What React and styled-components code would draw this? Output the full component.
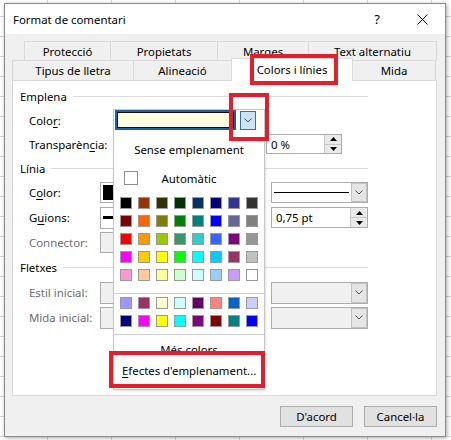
import React from "react";
import styled, { createGlobalStyle } from "styled-components";

const GlobalStyle = createGlobalStyle`
  html, body { margin: 0; padding: 0; }
  body {
    width: 451px;
    height: 440px;
    overflow: hidden;
    font-family: "Noto Sans", "Open Sans", Arial, sans-serif;
    font-size: 11.4px;
    color: #000;
    background-color: #fff;
    background-image:
      linear-gradient(to right, #d6d6d6 1px, transparent 1px),
      linear-gradient(to bottom, #d6d6d6 1px, transparent 1px);
    background-size: 64px 20px;
    background-position: 47px 16px;
  }
`;

const Page = styled.div`
  position: relative;
  width: 451px;
  height: 440px;
  box-sizing: border-box;
  padding: 3px 5px 3px 4px;
`;

const Dialog = styled.div`
  width: 442px;
  height: 434px;
  box-sizing: border-box;
  display: flex;
  flex-direction: column;
  background: #f0f0f0;
  border: 1px solid #8a8a8a;
  box-shadow: 1px 1px 4px rgba(0, 0, 0, 0.35);
`;

const TitleBar = styled.div`
  height: 30px;
  flex: none;
  display: flex;
  align-items: center;
  background: #fff;
  padding-left: 8px;
`;

const Title = styled.div`
  flex: 1;
`;

const TitleButton = styled.div`
  width: ${(p) => p.$w}px;
  height: 30px;
  display: flex;
  align-items: center;
  justify-content: center;
  margin-right: ${(p) => p.$mr || 0}px;
  font-size: 13px;
`;

const Body = styled.div`
  flex: 1;
  display: flex;
  flex-direction: column;
  padding: 7px 8px 0 7px;
`;

const TabRow = styled.div`
  display: flex;
  align-items: flex-start;
  height: ${(p) => p.$h}px;
  margin-left: ${(p) => p.$indent || 0}px;
`;

const Tab = styled.div`
  position: relative;
  box-sizing: border-box;
  width: ${(p) => p.$w}px;
  height: ${(p) => (p.$active ? p.$h + 3 : p.$h)}px;
  margin-top: ${(p) => (p.$active ? -2 : 0)}px;
  z-index: ${(p) => (p.$active ? 1 : 0)};
  display: flex;
  align-items: ${(p) => (p.$active ? "flex-start" : "center")};
  padding-top: ${(p) => (p.$active ? 3 : 0)}px;
  justify-content: center;
  background: ${(p) => (p.$active ? "#fff" : "#f0f0f0")};
  border-top: 1px solid #d9d9d9;
  border-right: 1px solid #d9d9d9;
  border-left: ${(p) => (p.$first || p.$active ? "1px solid #d9d9d9" : "none")};
  margin-left: ${(p) => (p.$active ? -1 : 0)}px;
  white-space: nowrap;
`;

const Panel = styled.div`
  position: relative;
  height: 316px;
  box-sizing: border-box;
  background: #fff;
  border: 1px solid #d9d9d9;
  padding: 3px 0 0 7px;
  display: flex;
  flex-direction: column;
`;

const Header = styled.div`
  width: 348px;
  height: ${(p) => p.$h || 24}px;
  display: flex;
  align-items: center;
  gap: 6px;
`;

const Rule = styled.div`
  flex: 1;
  height: 1px;
  background: #dcdcdc;
`;

const Row = styled.div`
  width: 339px;
  height: ${(p) => p.$h || 24}px;
  margin-left: 9px;
  display: flex;
  align-items: center;
`;

const Label = styled.div`
  width: ${(p) => p.$w}px;
  flex: none;
  color: ${(p) => (p.$disabled ? "#6d6d6d" : "#000")};
  white-space: nowrap;
`;

const Key = styled.span`
  text-decoration: underline;
  text-underline-offset: 2px;
`;

const ColorCombo = styled.div`
  position: relative;
  z-index: 2;
  display: flex;
  align-items: center;
  margin-left: 2px;
`;

const ColorField = styled.div`
  width: 121px;
  height: 20px;
  box-sizing: border-box;
  border: 2px solid #1b5fa8;
  box-shadow: inset 0 0 0 1px #111;
  background: #ffffe1;
`;

const ArrowButton = styled.div`
  box-sizing: border-box;
  width: ${(p) => p.$w || 16}px;
  height: ${(p) => p.$h || 19}px;
  margin-left: ${(p) => p.$ml || 0}px;
  display: flex;
  align-items: center;
  justify-content: center;
  background: ${(p) => (p.$hot ? "#cce4f7" : "#e5e5e5")};
  border: 1px solid ${(p) => (p.$hot ? "#2f74b5" : "#c2c2c2")};
  flex: none;
`;

const Field = styled.div`
  box-sizing: border-box;
  width: ${(p) => p.$w}px;
  height: ${(p) => p.$h || 21}px;
  margin-left: ${(p) => (p.$right ? "auto" : "0")};
  margin-right: ${(p) => p.$mr || 0}px;
  display: flex;
  align-items: center;
  border: 1px solid #adadad;
  background: ${(p) => (p.$disabled ? "#f0f0f0" : "#fff")};
  flex: none;
`;

const FieldText = styled.div`
  flex: 1;
  padding-left: 4px;
  white-space: nowrap;
`;

const LineSample = styled.div`
  flex: 1;
  height: ${(p) => p.$t || 1}px;
  margin: 0 ${(p) => p.$m || 2}px;
  background: #000;
`;

const FillSample = styled.div`
  flex: 1;
  align-self: stretch;
  margin: 2px;
  background: #000;
`;

const SpinStack = styled.div`
  width: 16px;
  align-self: stretch;
  display: flex;
  flex-direction: column;
  border-left: 1px solid #c8c8c8;
`;

const SpinHalf = styled.div`
  flex: 1;
  display: flex;
  align-items: center;
  justify-content: center;
  background: #e9e9e9;
  & + & {
    border-top: 1px solid #c8c8c8;
  }
`;

const Popup = styled.div`
  position: absolute;
  left: 100px;
  top: 28px;
  width: 152px;
  height: 281px;
  box-sizing: border-box;
  z-index: 1;
  background: #fff;
  border: 1px solid #c6c6c6;
  box-shadow: 1px 1px 2px rgba(0, 0, 0, 0.12);
  display: flex;
  flex-direction: column;
  padding-top: 28px;
`;

const MenuItem = styled.div`
  height: ${(p) => p.$h || 22}px;
  margin-top: ${(p) => p.$mt || 0}px;
  display: flex;
  align-items: center;
  justify-content: ${(p) => (p.$left ? "flex-start" : "center")};
  padding-left: ${(p) => (p.$left ? 8 : 0)}px;
  white-space: nowrap;
`;

const AutoRow = styled.div`
  position: relative;
  height: 24px;
  margin-top: 6px;
  display: flex;
  align-items: center;
  justify-content: center;
`;

const AutoBox = styled.div`
  position: absolute;
  left: 10px;
  top: 5px;
  width: 14px;
  height: 14px;
  box-sizing: border-box;
  border: 1px solid #8f8f8f;
  background: #fff;
`;

const Palette = styled.div`
  display: grid;
  grid-template-columns: repeat(8, 12px);
  grid-auto-rows: 12px;
  gap: 6px;
  margin: ${(p) => p.$mt}px 0 0 6px;
`;

const Swatch = styled.div`
  box-sizing: border-box;
  border: 1px solid #9a9a9a;
  background: ${(p) => p.$c};
`;

const MenuSeparator = styled.div`
  height: 1px;
  margin-top: ${(p) => p.$mt}px;
  background: #cfcfcf;
`;

const ButtonBar = styled.div`
  display: flex;
  justify-content: flex-end;
  gap: 11px;
  margin-top: 10px;
`;

const Button = styled.div`
  width: 73px;
  height: 21px;
  box-sizing: border-box;
  display: flex;
  align-items: center;
  justify-content: center;
  background: #e1e1e1;
  border: 1px solid #adadad;
`;

const Highlight = styled.div`
  position: absolute;
  left: ${(p) => p.$x}px;
  top: ${(p) => p.$y}px;
  width: ${(p) => p.$w}px;
  height: ${(p) => p.$h}px;
  box-sizing: border-box;
  border: 4px solid #e3202a;
  z-index: 5;
  pointer-events: none;
`;

const Chevron = ({ color = "#555" }) => (
  <svg width="8" height="5" viewBox="0 0 8 5">
    <polyline points="0.5,0.5 4,4 7.5,0.5" fill="none" stroke={color} strokeWidth="1" />
  </svg>
);

const Tri = ({ down }) => (
  <svg width="7" height="4" viewBox="0 0 7 4">
    <polygon points={down ? "0,0 7,0 3.5,4" : "0,4 7,4 3.5,0"} fill="#000" />
  </svg>
);

const Close = () => (
  <svg width="11" height="11" viewBox="0 0 11 11">
    <path d="M0.5 0.5 L10.5 10.5 M10.5 0.5 L0.5 10.5" stroke="#000" strokeWidth="1" />
  </svg>
);

const Spin = ({ w, mr, h, children }) => (
  <Field $w={w} $h={h} $right $mr={mr}>
    <FieldText>{children}</FieldText>
    <SpinStack>
      <SpinHalf><Tri /></SpinHalf>
      <SpinHalf><Tri down /></SpinHalf>
    </SpinStack>
  </Field>
);

const Dropdown = ({ w, h, disabled, children }) => (
  <Field $w={w} $h={h} $right $disabled={disabled}>
    {children || <FieldText />}
    <ArrowButton $w={16} $h={h - 2}>
      <Chevron />
    </ArrowButton>
  </Field>
);

const standard = [
  "#000000", "#993300", "#333300", "#003300", "#003366", "#000080", "#333399", "#333333",
  "#800000", "#FF6600", "#808000", "#008000", "#008080", "#0000FF", "#666699", "#808080",
  "#FF0000", "#FF9900", "#99CC00", "#339966", "#33CCCC", "#3366FF", "#800080", "#969696",
  "#FF00FF", "#FFCC00", "#FFFF00", "#00FF00", "#00FFFF", "#00CCFF", "#993366", "#C0C0C0",
  "#FF99CC", "#FFCC99", "#FFFF99", "#CCFFCC", "#CCFFFF", "#99CCFF", "#CC99FF", "#FFFFFF",
];

const extra = [
  "#9999FF", "#993366", "#FFFFCC", "#CCFFFF", "#660066", "#FF8080", "#0066CC", "#CCCCFF",
  "#000080", "#FF00FF", "#FFFF00", "#00FFFF", "#800080", "#800000", "#008080", "#0000FF",
];

const backTabs = [
  ["Protecció", 87],
  ["Propietats", 107],
  ["Marges", 91],
  ["Text alternatiu", 128],
];

const frontTabs = [
  ["Tipus de lletra", 122],
  ["Alineació", 98],
  ["Colors i línies", 122, true],
  ["Mida", 83],
];

export default function App() {
  return (
    <>
      <GlobalStyle />
      <Page>
        <Dialog>
          <TitleBar>
            <Title>Format de comentari</Title>
            <TitleButton $w={30} $mr={7}>?</TitleButton>
            <TitleButton $w={46}><Close /></TitleButton>
          </TitleBar>
          <Body>
            <TabRow $h={19} $indent={12}>
              {backTabs.map(([t, w], i) => (
                <Tab key={t} $w={w} $h={19} $first={i === 0}>{t}</Tab>
              ))}
            </TabRow>
            <TabRow $h={20}>
              {frontTabs.map(([t, w, active], i) => (
                <Tab key={t} $w={w} $h={20} $first={i === 0} $active={active}>{t}</Tab>
              ))}
            </TabRow>
            <Panel>
              <Header>Emplena<Rule /></Header>
              <Row>
                <Label $w={84}>Colo<Key>r</Key>:</Label>
                <ColorCombo>
                  <ColorField />
                  <ArrowButton $hot $ml={4}><Chevron color="#4a4a4a" /></ArrowButton>
                </ColorCombo>
              </Row>
              <Row>
                <Label $w={84}>Transparèn<Key>c</Key>ia:</Label>
                <Spin w={76} mr={26} h={20}>0 %</Spin>
              </Row>
              <Header>Línia<Rule /></Header>
              <Row $h={25}>
                <Label $w={71}>C<Key>o</Key>lor:</Label>
                <Field $w={120}><FillSample /></Field>
                <Dropdown w={97} h={21}>
                  <LineSample $m={2} />
                </Dropdown>
              </Row>
              <Row $h={25}>
                <Label $w={71}>G<Key>u</Key>ions:</Label>
                <Field $w={120} $h={22}><LineSample $t={3} $m={2} /></Field>
                <Spin w={97} h={21}>0,75 pt</Spin>
              </Row>
              <Row $h={25}>
                <Label $w={71} $disabled>Connector:</Label>
                <Field $w={120} $disabled />
              </Row>
              <Header $h={25}>Fletxes<Rule /></Header>
              <Row $h={25}>
                <Label $w={71} $disabled>Estil inicial:</Label>
                <Field $w={120} $h={22} $disabled />
                <Dropdown w={97} h={22} disabled />
              </Row>
              <Row $h={25}>
                <Label $w={71} $disabled>Mida inicial:</Label>
                <Field $w={120} $h={22} $disabled />
                <Dropdown w={97} h={22} disabled />
              </Row>

              <Popup>
                <MenuItem>Sense emplenament</MenuItem>
                <AutoRow>
                  <AutoBox />
                  Automàtic
                </AutoRow>
                <Palette $mt={7}>
                  {standard.map((c, i) => <Swatch key={i} $c={c} />)}
                </Palette>
                <MenuSeparator $mt={12} />
                <Palette $mt={3}>
                  {extra.map((c, i) => <Swatch key={i} $c={c} />)}
                </Palette>
                <MenuSeparator $mt={7} />
                <MenuItem $mt={4} $h={20}>Més colors</MenuItem>
                <MenuItem $left $h={22}><span><Key>E</Key>fectes d'emplenament...</span></MenuItem>
              </Popup>
            </Panel>
            <ButtonBar>
              <Button>D'acord</Button>
              <Button>Cancel·la</Button>
            </ButtonBar>
          </Body>
        </Dialog>

        <Highlight $x={250} $y={54} $w={88} $h={31} />
        <Highlight $x={229} $y={93} $w={40} $h={48} />
        <Highlight $x={109} $y={351} $w={156} $h={37} />
      </Page>
    </>
  );
}
